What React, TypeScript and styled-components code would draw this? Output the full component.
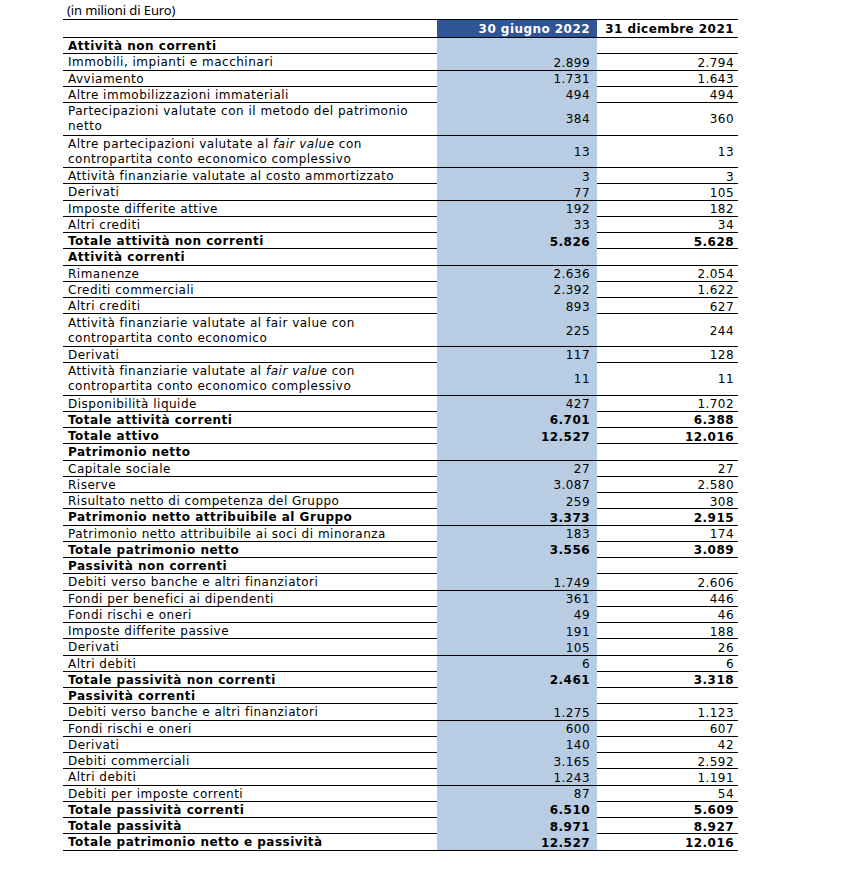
import React from "react";
import styled, { createGlobalStyle } from "styled-components";

const GlobalStyle = createGlobalStyle`
  html, body { margin: 0; padding: 0; background: #ffffff; }
  body { font-family: "DejaVu Sans", Verdana, sans-serif; color: #000000; }
`;

const Page = styled.div`
  width: 842px;
  padding-left: 63px;
  box-sizing: border-box;
`;

const Table = styled.div`
  width: 675px;
  display: flex;
  flex-direction: column;
`;

const TitleRow = styled.div`
  height: 20px;
  box-sizing: border-box;
  border-bottom: 1px solid #000;
  display: flex;
  align-items: center;
  padding-left: 4px;
  font-family: "Noto Sans", "Open Sans", sans-serif;
  font-size: 13px;
  letter-spacing: -0.1px;
`;

const Row = styled.div<{ $h: number }>`
  display: grid;
  grid-template-columns: 374px 160px 141px;
  height: ${(p) => p.$h}px;
  box-sizing: border-box;
  border-bottom: 1px solid #000;
`;

const LabelCell = styled.div<{ $bold?: boolean }>`
  display: flex;
  align-items: center;
  padding-left: 5px;
  padding-top: 1px;
  font-size: 12px;
  letter-spacing: 0.5px;
  line-height: 15px;
  font-weight: ${(p) => (p.$bold ? 700 : 400)};
  white-space: nowrap;
`;

const ValueCell = styled.div<{ $bold?: boolean; $current?: boolean; $header?: boolean }>`
  display: flex;
  align-items: center;
  justify-content: flex-end;
  padding-right: ${(p) => (p.$current ? "7px" : "4px")};
  padding-top: 1px;
  font-size: 12px;
  letter-spacing: 0.45px;
  font-weight: ${(p) => (p.$bold || p.$header ? 700 : 400)};
  background: ${(p) =>
    p.$current ? (p.$header ? "#2f5597" : "#b8cce4") : "transparent"};
  color: ${(p) => (p.$current && p.$header ? "#ffffff" : "#000000")};
  white-space: nowrap;
`;

const Em = styled.i`
  font-style: italic;
`;

type RowData = {
  label: React.ReactNode;
  a?: string;
  b?: string;
  bold?: boolean;
  double?: boolean;
};

const rows: RowData[] = [
  { label: "Attività non correnti", bold: true },
  { label: "Immobili, impianti e macchinari", a: "2.899", b: "2.794" },
  { label: "Avviamento", a: "1.731", b: "1.643" },
  { label: "Altre immobilizzazioni immateriali", a: "494", b: "494" },
  {
    label: (
      <>
        Partecipazioni valutate con il metodo del patrimonio
        <br />
        netto
      </>
    ),
    a: "384",
    b: "360",
    double: true,
  },
  {
    label: (
      <>
        Altre partecipazioni valutate al <Em>fair value</Em> con
        <br />
        contropartita conto economico complessivo
      </>
    ),
    a: "13",
    b: "13",
    double: true,
  },
  { label: "Attività finanziarie valutate al costo ammortizzato", a: "3", b: "3" },
  { label: "Derivati", a: "77", b: "105" },
  { label: "Imposte differite attive", a: "192", b: "182" },
  { label: "Altri crediti", a: "33", b: "34" },
  { label: "Totale attività non correnti", a: "5.826", b: "5.628", bold: true },
  { label: "Attività correnti", bold: true },
  { label: "Rimanenze", a: "2.636", b: "2.054" },
  { label: "Crediti commerciali", a: "2.392", b: "1.622" },
  { label: "Altri crediti", a: "893", b: "627" },
  {
    label: (
      <>
        Attività finanziarie valutate al fair value con
        <br />
        contropartita conto economico
      </>
    ),
    a: "225",
    b: "244",
    double: true,
  },
  { label: "Derivati", a: "117", b: "128" },
  {
    label: (
      <>
        Attività finanziarie valutate al <Em>fair value</Em> con
        <br />
        contropartita conto economico complessivo
      </>
    ),
    a: "11",
    b: "11",
    double: true,
  },
  { label: "Disponibilità liquide", a: "427", b: "1.702" },
  { label: "Totale attività correnti", a: "6.701", b: "6.388", bold: true },
  { label: "Totale attivo", a: "12.527", b: "12.016", bold: true },
  { label: "Patrimonio netto", bold: true },
  { label: "Capitale sociale", a: "27", b: "27" },
  { label: "Riserve", a: "3.087", b: "2.580" },
  { label: "Risultato netto di competenza del Gruppo", a: "259", b: "308" },
  { label: "Patrimonio netto attribuibile al Gruppo", a: "3.373", b: "2.915", bold: true },
  { label: "Patrimonio netto attribuibile ai soci di minoranza", a: "183", b: "174" },
  { label: "Totale patrimonio netto", a: "3.556", b: "3.089", bold: true },
  { label: "Passività non correnti", bold: true },
  { label: "Debiti verso banche e altri finanziatori", a: "1.749", b: "2.606" },
  { label: "Fondi per benefici ai dipendenti", a: "361", b: "446" },
  { label: "Fondi rischi e oneri", a: "49", b: "46" },
  { label: "Imposte differite passive", a: "191", b: "188" },
  { label: "Derivati", a: "105", b: "26" },
  { label: "Altri debiti", a: "6", b: "6" },
  { label: "Totale passività non correnti", a: "2.461", b: "3.318", bold: true },
  { label: "Passività correnti", bold: true },
  { label: "Debiti verso banche e altri finanziatori", a: "1.275", b: "1.123" },
  { label: "Fondi rischi e oneri", a: "600", b: "607" },
  { label: "Derivati", a: "140", b: "42" },
  { label: "Debiti commerciali", a: "3.165", b: "2.592" },
  { label: "Altri debiti", a: "1.243", b: "1.191" },
  { label: "Debiti per imposte correnti", a: "87", b: "54" },
  { label: "Totale passività correnti", a: "6.510", b: "5.609", bold: true },
  { label: "Totale passività", a: "8.971", b: "8.927", bold: true },
  { label: "Totale patrimonio netto e passività", a: "12.527", b: "12.016", bold: true },
];

export default function App() {
  return (
    <>
      <GlobalStyle />
      <Page>
        <Table>
          <TitleRow>(in milioni di Euro)</TitleRow>
          <Row $h={18}>
            <LabelCell />
            <ValueCell $current $header>30 giugno 2022</ValueCell>
            <ValueCell $header>31 dicembre 2021</ValueCell>
          </Row>
          {rows.map((r, i) => (
            <Row key={i} $h={r.double ? 32.5 : 16.26}>
              <LabelCell $bold={r.bold}>
                <span>{r.label}</span>
              </LabelCell>
              <ValueCell $current $bold={r.bold}>
                {r.a ?? ""}
              </ValueCell>
              <ValueCell $bold={r.bold}>{r.b ?? ""}</ValueCell>
            </Row>
          ))}
        </Table>
      </Page>
    </>
  );
}
